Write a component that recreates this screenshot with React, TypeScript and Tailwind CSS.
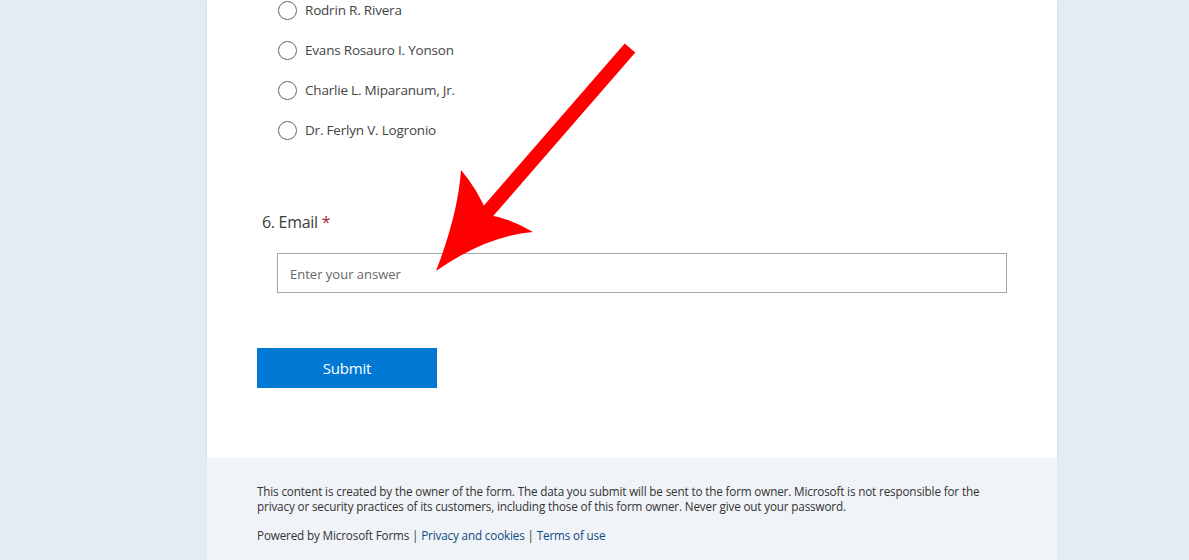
import React from "react";

const choices = [
  "Rodrin R. Rivera",
  "Evans Rosauro I. Yonson",
  "Charlie L. Miparanum, Jr.",
  "Dr. Ferlyn V. Logronio",
];

function Arrow() {
  return (
    <svg
      className="pointer-events-none absolute left-0 top-0"
      width="1189"
      height="560"
      viewBox="0 0 1189 560"
    >
      <line x1="630" y1="48" x2="484" y2="216" stroke="#ff0000" strokeWidth="14" />
      <path
        d="M436 271 Q458 214 461 170 Q478 190 488 215 Q510 218 533 232 Q486 236 436 271 Z"
        fill="#ff0000"
      />
    </svg>
  );
}

export default function App() {
  return (
    <div
      className="relative h-[560px] w-full overflow-hidden bg-[#e5ebf2] text-[#333]"
      style={{ fontFamily: '"Open Sans", "Noto Sans", sans-serif' }}
    >
      <div className="ml-[207px] w-[850px]">
        <div className="bg-white pb-[70px] pl-[50px] pr-[50px] shadow-[0_1px_3px_rgba(0,0,0,0.08)]">
          <div className="flex flex-col gap-5 pl-[21px]">
            {choices.map((c) => (
              <div key={c} className="flex h-5 items-center gap-[8px]">
                <span className="h-[19px] w-[19px] rounded-full border border-[#666]" />
                <span className="text-[13.5px] tracking-[-0.2px] text-[#444]">{c}</span>
              </div>
            ))}
          </div>

          <div className="mt-[70px] pl-[5px] text-[16px] leading-6 tracking-[-0.3px] text-[#3b3b3b]">
            6. Email <span className="text-[#a4262c]">*</span>
          </div>
          <div className="mt-[19px] pl-5">
            <div className="flex h-10 w-[730px] items-center border border-[#a6a6a6] px-3 pt-[3px] text-[13px] text-[#666]">
              Enter your answer
            </div>
          </div>

          <button className="mt-[55px] h-10 w-[180px] bg-[#0078d4] text-[15px] font-medium tracking-[-0.2px] text-white">
            Submit
          </button>
        </div>

        <div className="bg-[#f0f3f7] px-[50px] pt-[26px] text-[11.7px] leading-[15px] tracking-[-0.15px] text-[#333]">
          <p>
            This content is created by the owner of the form. The data you submit will be sent to the form owner. Microsoft is not responsible for the
            privacy or security practices of its customers, including those of this form owner. Never give out your password.
          </p>
          <p className="mt-[14px]">
            Powered by Microsoft Forms | <span className="text-[#0f4a85]">Privacy and cookies</span> |{" "}
            <span className="text-[#0f4a85]">Terms of use</span>
          </p>
          <div className="h-10" />
        </div>
      </div>
      <Arrow />
    </div>
  );
}
